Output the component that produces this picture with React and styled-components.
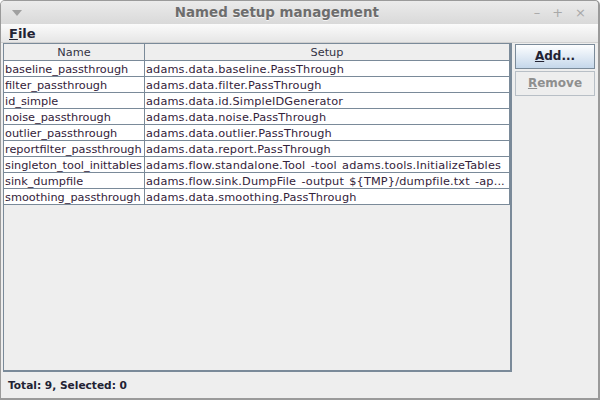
import React from 'react'
import styled, { createGlobalStyle } from 'styled-components'

const GlobalStyle = createGlobalStyle`
  html, body {
    margin: 0;
    padding: 0;
    background: #ffffff;
  }
  * {
    box-sizing: border-box;
  }
`

const Frame = styled.div`
  width: 600px;
  height: 400px;
  display: flex;
  flex-direction: column;
  background: #eeeeee;
  border: 1px solid #9a9a9a;
  border-right-width: 2px;
  border-bottom-width: 2px;
  border-radius: 5px 5px 0 0;
  overflow: hidden;
  font-family: 'DejaVu Sans', sans-serif;
  color: #333333;
`

const TitleBar = styled.div`
  height: 24px;
  display: flex;
  align-items: center;
  padding: 0 12px 0 11px;
  background: linear-gradient(#ebebeb, #d9d9d9);
`

const TitleText = styled.div`
  flex: 1;
  text-align: center;
  font-size: 13.4px;
  font-weight: bold;
  color: #6d6d6d;
  padding-right: 2px;
  text-shadow: 0 1px 0 #f4f4f4;
`

const Controls = styled.div`
  display: flex;
  gap: 12px;
  color: #a8a8a8;
  font-size: 13px;
`

const MenuBar = styled.div`
  height: 19px;
  display: flex;
  align-items: center;
  padding-left: 8px;
  background: linear-gradient(#fbfbfb, #e6e6e6);
  border-bottom: 1px solid #d0d0d0;
`

const MenuItem = styled.span`
  font-size: 13px;
  font-weight: bold;
  color: #222233;
  & u {
    text-decoration-thickness: 1px;
  }
`

const Body = styled.div`
  flex: 1;
  display: flex;
  gap: 3px;
  padding: 0 3px 0 2px;
`

const ScrollPane = styled.div`
  width: 510px;
  height: 329px;
  border: 1px solid #7a8a99;
  border-right-width: 2px;
  border-bottom-width: 2px;
  background: #eeeeee;
`

const Table = styled.div`
  display: grid;
  grid-template-columns: 141px 365px;
  font-size: 11.3px;
`

const HeaderCell = styled.div`
  height: 17px;
  line-height: 18px;
  text-align: center;
  background: #eeeeee;
  color: #333344;
  border-right: 1px solid #7a8a99;
  border-bottom: 1px solid #7a8a99;
  white-space: nowrap;
`

const Cell = styled.div`
  height: 16px;
  line-height: 17px;
  padding-left: 1px;
  background: #ffffff;
  color: #33223a;
  border-right: 1px solid #7a8a99;
  border-bottom: 1px solid #7a8a99;
  white-space: nowrap;
  overflow: hidden;
  letter-spacing: ${(p) => (p.$wide ? '0.15px' : '0')};
  word-spacing: ${(p) => (p.$wide ? '1.5px' : '0')};
`

const ButtonColumn = styled.div`
  display: flex;
  flex-direction: column;
  gap: 2px;
  padding-top: 1px;
`

const Button = styled.div`
  width: 80px;
  height: 25px;
  display: flex;
  align-items: center;
  justify-content: center;
  font-size: 12px;
  font-weight: bold;
  border: 1px solid ${(p) => (p.disabled ? '#b8bfc6' : '#7a8a99')};
  background: ${(p) =>
    p.disabled ? '#eeeeee' : 'linear-gradient(#fdfeff, #c5d7ea)'};
  color: ${(p) => (p.disabled ? '#8f8f8f' : '#222233')};
`

const StatusBar = styled.div`
  height: 27px;
  display: flex;
  align-items: center;
  padding-left: 7px;
  padding-top: 1px;
  font-size: 10.6px;
  font-weight: bold;
  color: #222233;
`

const rows = [
  ['baseline_passthrough', 'adams.data.baseline.PassThrough'],
  ['filter_passthrough', 'adams.data.filter.PassThrough'],
  ['id_simple', 'adams.data.id.SimpleIDGenerator'],
  ['noise_passthrough', 'adams.data.noise.PassThrough'],
  ['outlier_passthrough', 'adams.data.outlier.PassThrough'],
  ['reportfilter_passthrough', 'adams.data.report.PassThrough'],
  ['singleton_tool_inittables', 'adams.flow.standalone.Tool -tool adams.tools.InitializeTables'],
  ['sink_dumpfile', 'adams.flow.sink.DumpFile -output ${TMP}/dumpfile.txt -ap...'],
  ['smoothing_passthrough', 'adams.data.smoothing.PassThrough'],
]

const Arrow = () => (
  <svg width="10" height="6" viewBox="0 0 10 6">
    <path d="M0 0 L10 0 L5 6 Z" fill="#a0a0a0" />
  </svg>
)

const App = () => (
  <>
    <GlobalStyle />
    <Frame>
      <TitleBar>
        <Arrow />
        <TitleText>Named setup management</TitleText>
        <Controls>
          <span>–</span>
          <span>+</span>
          <span>×</span>
        </Controls>
      </TitleBar>
      <MenuBar>
        <MenuItem>
          <u>F</u>ile
        </MenuItem>
      </MenuBar>
      <Body>
        <ScrollPane>
          <Table>
            <HeaderCell>Name</HeaderCell>
            <HeaderCell>Setup</HeaderCell>
            {rows.map(([name, setup]) => (
              <React.Fragment key={name}>
                <Cell>{name}</Cell>
                <Cell $wide>{setup}</Cell>
              </React.Fragment>
            ))}
          </Table>
        </ScrollPane>
        <ButtonColumn>
          <Button>
            <span>
              <u>A</u>dd...
            </span>
          </Button>
          <Button disabled>
            <span>
              <u>R</u>emove
            </span>
          </Button>
        </ButtonColumn>
      </Body>
      <StatusBar>Total: 9, Selected: 0</StatusBar>
    </Frame>
  </>
)

export default App
